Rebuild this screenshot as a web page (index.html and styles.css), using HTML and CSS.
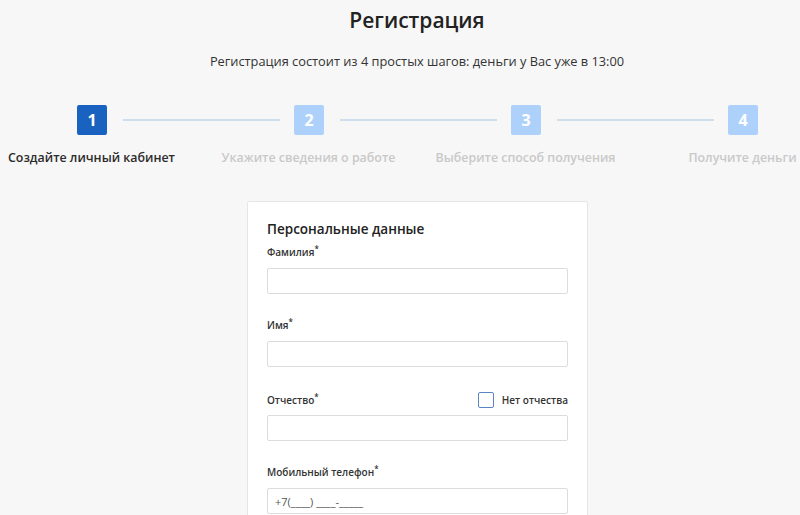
FILE: index.html
```html
<!DOCTYPE html>
<html lang="ru">
<head>
  <meta charset="UTF-8">
  <title>Регистрация</title>
  <link rel="stylesheet" href="styles.css">
</head>
<body>

<div class="page">
  <h1>Регистрация</h1>
  <p class="lead">Регистрация состоит из 4 простых шагов: деньги у Вас уже в 13:00</p>

  <div class="steps">
    <div class="step-track">
      <div class="step-num active">1</div>
      <div class="step-line"></div>
      <div class="step-num">2</div>
      <div class="step-line"></div>
      <div class="step-num">3</div>
      <div class="step-line"></div>
      <div class="step-num">4</div>
    </div>
    <div class="step-labels">
      <div class="step-label active">Создайте личный кабинет</div>
      <div class="step-label">Укажите сведения о работе</div>
      <div class="step-label">Выберите способ получения</div>
      <div class="step-label">Получите деньги</div>
    </div>
  </div>

  <div class="card">
    <h2>Персональные данные</h2>

    <div class="field">
      <label class="field-label">Фамилия<sup>*</sup></label>
      <div class="input"></div>
    </div>

    <div class="field">
      <label class="field-label">Имя<sup>*</sup></label>
      <div class="input"></div>
    </div>

    <div class="field">
      <div class="field-head">
        <label class="field-label">Отчество<sup>*</sup></label>
        <label class="check"><span class="check-box"></span>Нет отчества</label>
      </div>
      <div class="input"></div>
    </div>

    <div class="field">
      <label class="field-label">Мобильный телефон<sup>*</sup></label>
      <div class="input"><span class="placeholder">+7(____) ____-_____</span></div>
    </div>
  </div>
</div>

</body>
</html>
```

FILE: styles.css
```css
body {
  margin: 0;
  background: #f7f7f7;
  color: #2b2b2b;
  font-family: 'Open Sans', 'Liberation Sans', sans-serif;
  overflow: hidden;
}

.page {
  width: 868px;
  margin-left: -17px;
}

h1 {
  margin: 0;
  padding-top: 5px;
  text-align: center;
  font-size: 21px;
  font-weight: 600;
  line-height: 30px;
  color: #222;
}

.lead {
  margin: 16px 0 0;
  text-align: center;
  font-size: 12.8px;
  line-height: 20px;
  color: #333;
}

.steps {
  margin-top: 34px;
}

.step-track {
  display: flex;
  align-items: center;
  padding: 0 93px 0 94px;
}

.step-num {
  width: 30px;
  height: 30px;
  flex: none;
  border-radius: 2px;
  background: #aed1fc;
  color: #fff;
  font-size: 16px;
  font-weight: 700;
  line-height: 30px;
  text-align: center;
}

.step-num.active {
  background: #1a62c0;
}

.step-line {
  flex: 1;
  height: 2px;
  margin: 0 14px 0 16px;
  background: #cfdeec;
}

.step-labels {
  display: grid;
  grid-template-columns: repeat(4, 217px);
  margin-top: 13px;
}

.step-label {
  text-align: center;
  font-size: 12.4px;
  font-weight: 600;
  line-height: 20px;
  color: #c9c9c9;
}

.step-label.active {
  color: #2b2b2b;
}

.card {
  width: 301px;
  margin: 33px 0 0 264px;
  padding: 16px 19px 40px;
  background: #fff;
  border: 1px solid #e6e6e6;
  border-radius: 2px;
}

h2 {
  margin: 0 0 4px;
  font-size: 13.5px;
  font-weight: 600;
  line-height: 22px;
  color: #222;
}

.field {
  margin-bottom: 23px;
}

.field-label {
  display: block;
  font-size: 10px;
  font-weight: 600;
  line-height: 16px;
  color: #333;
  margin-bottom: 8px;
}

.field-label sup {
  font-size: 8px;
  line-height: 0;
}

.field-head {
  display: flex;
  justify-content: space-between;
  align-items: center;
  height: 16px;
  padding-top: 2px;
  margin-bottom: 7px;
}

.field-head .field-label {
  margin: 0;
}

.check {
  display: flex;
  align-items: center;
  font-size: 10px;
  font-weight: 600;
  color: #333;
}

.check-box {
  width: 14px;
  height: 14px;
  margin-right: 8px;
  border: 1px solid #5a86c4;
  border-radius: 2px;
  background: #fff;
}

.input {
  height: 24px;
  border: 1px solid #dcdcdc;
  border-radius: 2px;
  background: #fff;
  display: flex;
  align-items: center;
  padding: 0 7px;
}

.placeholder {
  font-size: 11px;
  color: #555;
}
```
